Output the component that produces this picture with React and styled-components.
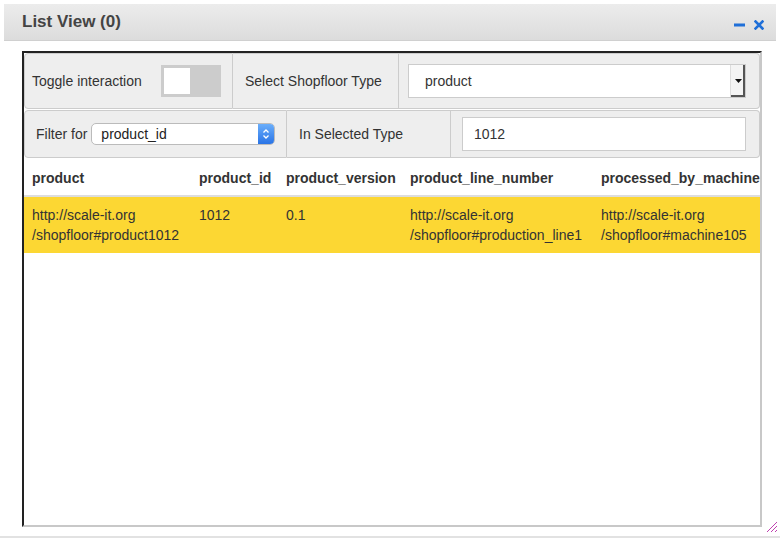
import React from 'react';
import styled, { createGlobalStyle } from 'styled-components';

const GlobalStyle = createGlobalStyle`
  html, body {
    margin: 0;
    padding: 0;
    background: #fff;
    font-family: 'Liberation Sans', Arial, sans-serif;
  }
`;

const Page = styled.div`
  width: 780px;
  height: 538px;
  box-sizing: border-box;
  padding: 4px 4px 0 4px;
  border-bottom: 2px solid #e2e2e2;
  position: relative;
`;

const Header = styled.div`
  height: 37px;
  display: flex;
  align-items: center;
  justify-content: space-between;
  padding: 0 12px 0 18px;
  background: linear-gradient(#ececec, #dcdcdc);
  border-bottom: 1px solid #d0d0d0;
  box-sizing: border-box;
`;

const Title = styled.h2`
  margin: 0;
  font-size: 17px;
  font-weight: bold;
  color: #444;
`;

const Tools = styled.div`
  display: flex;
  align-items: center;
  gap: 9px;
  padding-top: 6px;
`;

const Body = styled.div`
  padding: 10px 0 0 18px;
`;

const Frame = styled.div`
  width: 740px;
  height: 476px;
  box-sizing: border-box;
  border-style: solid;
  border-width: 2px;
  border-color: #222 #c8c8c8 #c8c8c8 #222;
  background: #fff;
  overflow: hidden;
`;

const ControlRow = styled.div`
  display: flex;
  height: ${p => p.h}px;
  margin-bottom: 1px;
`;

const Cell = styled.div`
  width: ${p => p.w}px;
  box-sizing: border-box;
  display: flex;
  align-items: center;
  gap: ${p => p.gap || 0}px;
  padding: 0 ${p => p.pr || 0}px 0 ${p => p.pl || 0}px;
  background: #eee;
  border: 1px solid #ccc;
  border-left: ${p => (p.first ? '1px solid #ccc' : 'none')};
  border-radius: ${p => p.radius || '0'};
  font-size: 14px;
  color: #333;
  white-space: nowrap;
`;

const Toggle = styled.div`
  width: 60px;
  height: 32px;
  box-sizing: border-box;
  padding: 3px;
  background: #ccc;
  display: flex;
`;

const Knob = styled.div`
  width: 26px;
  height: 26px;
  background: #fff;
`;

const SelectBox = styled.div`
  flex: 1;
  height: 34px;
  display: flex;
  align-items: stretch;
  background: #fff;
  border: 1px solid #ccc;
  box-sizing: border-box;
`;

const SelectText = styled.span`
  flex: 1;
  display: flex;
  align-items: center;
  padding-left: 16px;
  font-size: 14px;
  color: #333;
`;

const SelectButton = styled.div`
  width: 14px;
  display: flex;
  align-items: center;
  justify-content: center;
  background: #f4f4f4;
  border-left: 1px solid #ddd;
  box-shadow: inset -2px -2px 0 #555;
`;

const MacSelect = styled.div`
  width: 184px;
  height: 22px;
  box-sizing: border-box;
  display: flex;
  align-items: stretch;
  background: #fff;
  border: 1px solid #bbb;
  border-radius: 5px;
  overflow: hidden;
`;

const MacText = styled.span`
  flex: 1;
  display: flex;
  align-items: center;
  padding-left: 9px;
  font-size: 14px;
  color: #222;
`;

const Stepper = styled.div`
  width: 16px;
  display: flex;
  align-items: center;
  justify-content: center;
  background: linear-gradient(#6aaefb, #2a74e6);
`;

const TextInput = styled.div`
  flex: 1;
  height: 34px;
  box-sizing: border-box;
  display: flex;
  align-items: center;
  padding-left: 11px;
  background: #fff;
  border: 1px solid #ccc;
  font-size: 14px;
  color: #333;
`;

const Table = styled.table`
  border-collapse: collapse;
  width: 736px;
  table-layout: fixed;
  margin-top: 1px;
  font-size: 14px;
  color: #333;
`;

const Th = styled.th`
  width: ${p => p.w - 16}px;
  text-align: left;
  font-weight: bold;
  padding: 11px 8px 9px 8px;
  line-height: 16px;
  border-bottom: 2px solid #ddd;
  white-space: nowrap;
`;

const Td = styled.td`
  vertical-align: top;
  padding: 8px 8px 8px 8px;
  line-height: 20px;
  background: #fcd733;
  white-space: nowrap;
`;

const Grip = styled.svg`
  position: absolute;
  right: 2px;
  bottom: 3px;
`;

const columns = [
  { name: 'product', w: 167 },
  { name: 'product_id', w: 87 },
  { name: 'product_version', w: 124 },
  { name: 'product_line_number', w: 191 },
  { name: 'processed_by_machine', w: 167 },
];

const row = [
  ['http://scale-it.org', '/shopfloor#product1012'],
  ['1012'],
  ['0.1'],
  ['http://scale-it.org', '/shopfloor#production_line1'],
  ['http://scale-it.org', '/shopfloor#machine105'],
];

export default function App() {
  return (
    <>
      <GlobalStyle />
      <Page>
        <Header>
          <Title>List View (0)</Title>
          <Tools>
            <svg width="11" height="10" viewBox="0 0 11 10">
              <rect x="0" y="3.5" width="11" height="3" fill="#1f6fd8" />
            </svg>
            <svg width="10" height="10" viewBox="0 0 10 10">
              <path d="M1.5 1.5 L8.5 8.5 M8.5 1.5 L1.5 8.5" stroke="#1f6fd8" strokeWidth="2.6" strokeLinecap="square" />
            </svg>
          </Tools>
        </Header>
        <Body>
          <Frame>
            <ControlRow h={56}>
              <Cell w={209} first pl={7} gap={19} radius="4px 0 0 4px">
                Toggle interaction
                <Toggle><Knob /></Toggle>
              </Cell>
              <Cell w={166} pl={12}>Select Shopfloor Type</Cell>
              <Cell w={361} pl={9} pr={13} radius="0 4px 4px 0">
                <SelectBox>
                  <SelectText>product</SelectText>
                  <SelectButton>
                    <svg width="7" height="4" viewBox="0 0 7 4">
                      <path d="M0 0 L7 0 L3.5 4 Z" fill="#111" />
                    </svg>
                  </SelectButton>
                </SelectBox>
              </Cell>
            </ControlRow>
            <ControlRow h={48}>
              <Cell w={263} first pl={11} gap={4} radius="4px 0 0 4px">
                Filter for
                <MacSelect>
                  <MacText>product_id</MacText>
                  <Stepper>
                    <svg width="8" height="12" viewBox="0 0 8 12">
                      <path d="M1.5 4.5 L4 2 L6.5 4.5 M1.5 7.5 L4 10 L6.5 7.5" stroke="#fff" strokeWidth="1.3" fill="none" />
                    </svg>
                  </Stepper>
                </MacSelect>
              </Cell>
              <Cell w={164} pl={12}>In Selected Type</Cell>
              <Cell w={309} pl={11} pr={13} radius="0 4px 4px 0">
                <TextInput>1012</TextInput>
              </Cell>
            </ControlRow>
            <Table>
              <thead>
                <tr>
                  {columns.map(c => (
                    <Th key={c.name} w={c.w}>{c.name}</Th>
                  ))}
                </tr>
              </thead>
              <tbody>
                <tr>
                  {row.map((lines, i) => (
                    <Td key={i}>
                      {lines.map((l, j) => (
                        <div key={j}>{l}</div>
                      ))}
                    </Td>
                  ))}
                </tr>
              </tbody>
            </Table>
          </Frame>
        </Body>
        <Grip width="12" height="12" viewBox="0 0 12 12">
          <path d="M1 11 L11 1 M5 11 L11 5 M9 11 L11 9" stroke="#c040b0" strokeWidth="1" />
        </Grip>
      </Page>
    </>
  );
}
